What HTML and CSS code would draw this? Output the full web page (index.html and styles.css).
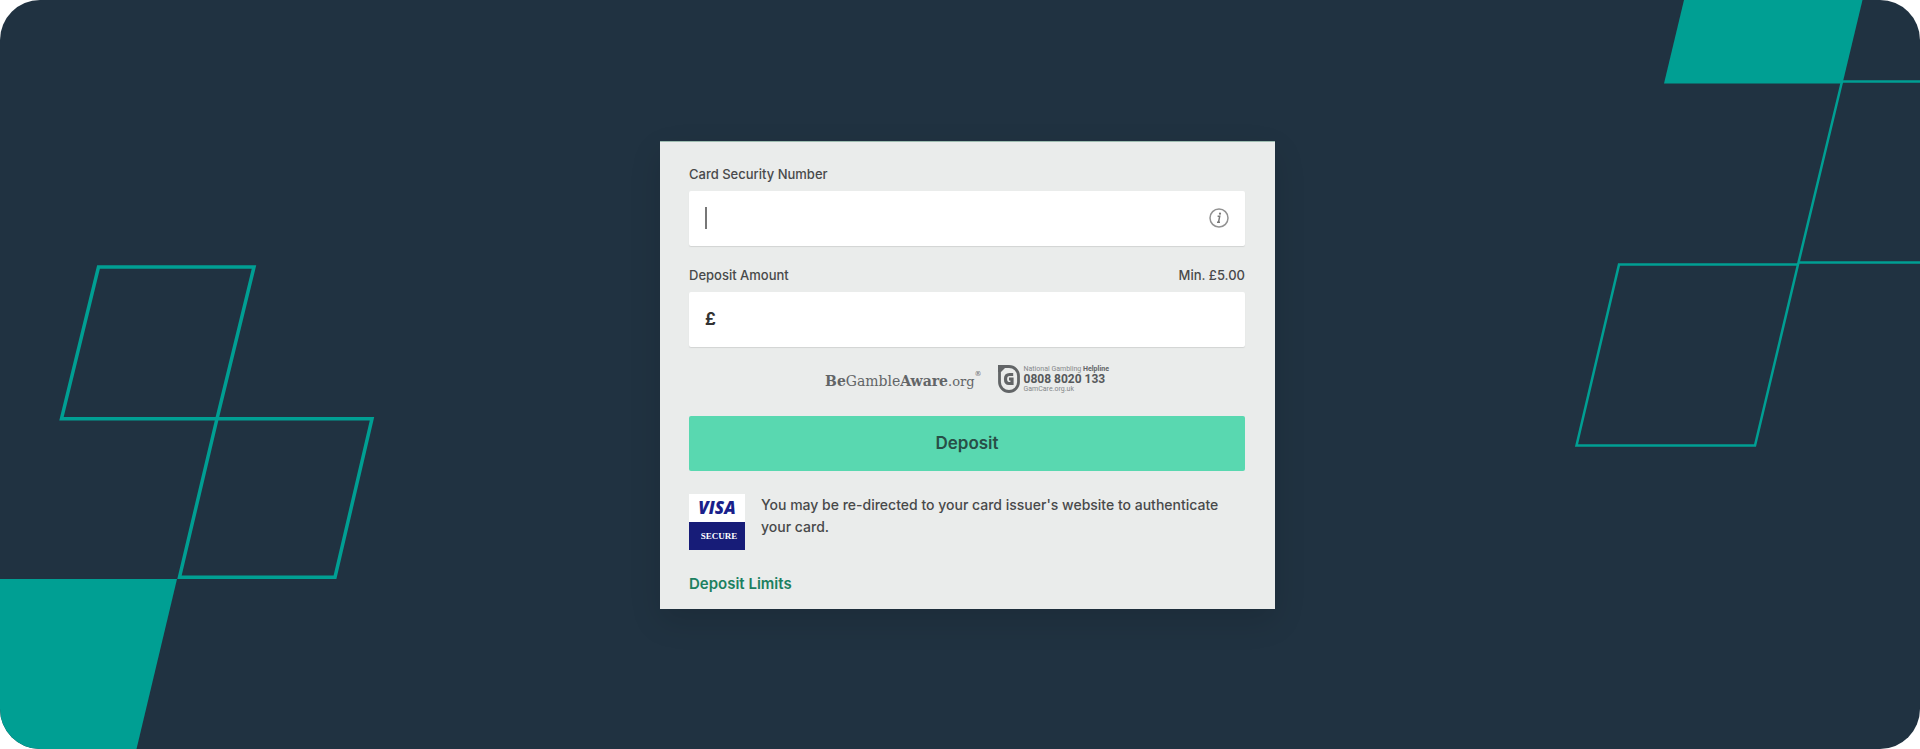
FILE: index.html
```html
<!DOCTYPE html>
<html lang="en">
<head>
	<meta charset="UTF-8">
	<title>Deposit</title>
	<link rel="stylesheet" href="styles.css">
</head>
<body>
	<div class="banner">
		<svg class="shape shape_l" width="376" height="485" viewBox="0 264 376 485" aria-hidden="true">
			<path class="line thick" d="M98.5 267H254L217 418.700H61.500ZM217 418.700H372L335 577.200H179.500Z"/>
			<path class="fill" d="M0 579H177L136.500 749H0Z"/>
		</svg>
		<svg class="shape shape_r" width="346" height="448" viewBox="1574 0 346 448" aria-hidden="true">
			<path class="fill" d="M1684 0H1862.500L1842.500 83.500H1664Z"/>
			<path class="line" d="M1925 81.500H1842L1798.500 262.500H1925M1619 264.600H1798L1755 445.500H1576.500ZM1798.500 262.500L1798 264.600"/>
		</svg>

		<form class="card">
			<div class="row">
				<label for="csn">Card Security Number</label>
			</div>
			<div class="field">
				<span class="caret"></span>
				<input type="text" id="csn" inputmode="numeric" autocomplete="off">
				<button type="button" class="info" aria-label="Card security number help">
					<svg width="20" height="20" viewBox="0 0 20 20">
						<circle cx="10" cy="10" r="9" fill="none" stroke="#929292" stroke-width="1.500"/>
						<path d="M8.600 8.300H10.700L9.500 14.200H11M8 14.200H9.500" fill="none" stroke="#777" stroke-width="1.500"/>
						<circle cx="11" cy="5.700" r="1.100" fill="#777"/>
					</svg>
				</button>
			</div>

			<div class="row">
				<label for="amount">Deposit Amount</label>
				<span>Min. £5.00</span>
			</div>
			<div class="field">
				<span class="pound">£</span>
				<input type="text" id="amount" inputmode="decimal" autocomplete="off">
			</div>

			<div class="logos">
				<div class="aware"><b>Be</b>Gamble<b>Aware</b><small>.org</small><sup>®</sup></div>
				<div class="care">
					<svg width="22" height="28" viewBox="0 0 22 28" aria-hidden="true">
						<path d="M1.500 1.500H11A9.500 9.500 0 0 1 20.500 11V17A9.500 9.500 0 0 1 1.500 17Z" fill="none" stroke="#626567" stroke-width="2.800"/>
						<path d="M0 0H10L3 7H0Z" fill="#626567"/>
						<path d="M15.200 9.500H11.500Q7.500 9.500 7.500 14Q7.500 18.500 11 18.500H14V14H11" fill="none" stroke="#626567" stroke-width="3.200"/>
					</svg>
					<div class="help">
						<span>National Gambling <b>Helpline</b></span>
						<strong>0808 8020 133</strong>
						<span>GamCare.org.uk</span>
					</div>
				</div>
			</div>

			<button type="submit" class="submit">Deposit</button>

			<div class="notice">
				<div class="visa">
					<span class="visa_top">VISA</span>
					<span class="visa_bottom">SECURE</span>
				</div>
				<p>You may be re-directed to your card issuer's website to authenticate your card.</p>
			</div>

			<a href="#" class="limits">Deposit Limits</a>
		</form>
	</div>
</body>
</html>
```
FILE: styles.css
```css
* {
	box-sizing: border-box;
	padding: 0;
	margin: 0;
}
body {
	background: #fff;
	font-family: Inter, "Liberation Sans", sans-serif;
	font-size: 14px;
	font-weight: 500;
	color: #48494a;
}
.banner {
	position: relative;
	display: flex;
	align-items: center;
	justify-content: center;
	min-height: 100vh;
	padding: 24px 0 24px 15px;
	border-radius: 40px;
	background: #203241;
	overflow: hidden;
}

/* 背景图形 */
.shape {
	position: absolute;
}
.shape_l {
	left: 0;
	bottom: 0;
}
.shape_r {
	right: 0;
	top: 0;
}
.fill {
	fill: #009f93;
}
.line {
	fill: none;
	stroke: #009f93;
	stroke-width: 2.5;
}
.thick {
	stroke-width: 3.5;
}

/* card */
.card {
	position: relative;
	width: 100%;
	max-width: 615px;
	padding: 23px 30px 15px 29px;
	border-top: 1px solid #9dbcb0;
	background: #eaeceb;
	box-shadow: 0 12px 30px rgba(0,0,0,0.12);
}
.row {
	display: flex;
	justify-content: space-between;
	font-size: 13px;
	line-height: 18px;
	margin-bottom: 8px;
}
.field {
	display: flex;
	align-items: center;
	height: 55px;
	padding: 0 16px;
	margin-bottom: 20px;
	border-radius: 2px;
	background: #fff;
	box-shadow: 0 1px 1px rgba(0,0,0,0.1);
}
.field input {
	flex: 1;
	min-width: 0;
	height: 100%;
	border: 0;
	outline: 0;
	background: transparent;
	font: inherit;
	font-size: 16px;
}
.caret {
	width: 2px;
	height: 22px;
	background: #777;
}
.pound {
	font-size: 17px;
	font-weight: 700;
	color: #333;
}
.info {
	height: 20px;
	border: 0;
	background: none;
	cursor: pointer;
}
.logos {
	display: flex;
	justify-content: center;
	align-items: center;
	gap: 16px;
	height: 28px;
	margin: -2px 0 23px;
	color: #626567;
}
.aware {
	padding-top: 6px;
	font-family: "DejaVu Serif", serif;
	font-size: 14px;
	font-weight: 400;
	line-height: 24px;
	white-space: nowrap;
}
.aware small {
	font-size: 13px;
}
.aware sup {
	font-size: 7px;
	line-height: 7px;
	vertical-align: 10px;
}
.care {
	display: flex;
	gap: 4px;
}
.help {
	display: flex;
	flex-direction: column;
	font-family: Roboto, sans-serif;
	font-size: 7px;
	font-weight: 400;
	line-height: 8px;
	color: #85888a;
	white-space: nowrap;
}
.help b {
	color: #626567;
}
.help strong {
	font-size: 12px;
	line-height: 12px;
	color: #56595b;
}
.submit {
	display: block;
	width: 100%;
	height: 55px;
	margin-bottom: 23px;
	border: 0;
	border-radius: 2px;
	background: #59d8b0;
	font: inherit;
	font-size: 17px;
	font-weight: 600;
	color: #284f47;
	cursor: pointer;
}
.notice {
	display: flex;
	gap: 16px;
	margin-bottom: 24px;
}
.notice p {
	line-height: 22px;
}
.visa {
	flex: none;
	width: 56px;
	text-align: center;
}
.visa span {
	display: block;
	height: 28px;
	line-height: 28px;
}
.visa_top {
	background: #fff;
	font-family: "Open Sans", sans-serif;
	font-size: 17px;
	font-style: italic;
	font-weight: 800;
	color: #1a1f8b;
}
.visa_bottom {
	padding-left: 4px;
	background: #171c78;
	font-family: "Liberation Serif", serif;
	font-size: 9px;
	font-weight: 700;
	color: #fff;
}
.limits {
	display: block;
	width: fit-content;
	line-height: 20px;
	font-size: 15px;
	font-weight: 600;
	color: #1c8060;
	text-decoration: none;
}
```
